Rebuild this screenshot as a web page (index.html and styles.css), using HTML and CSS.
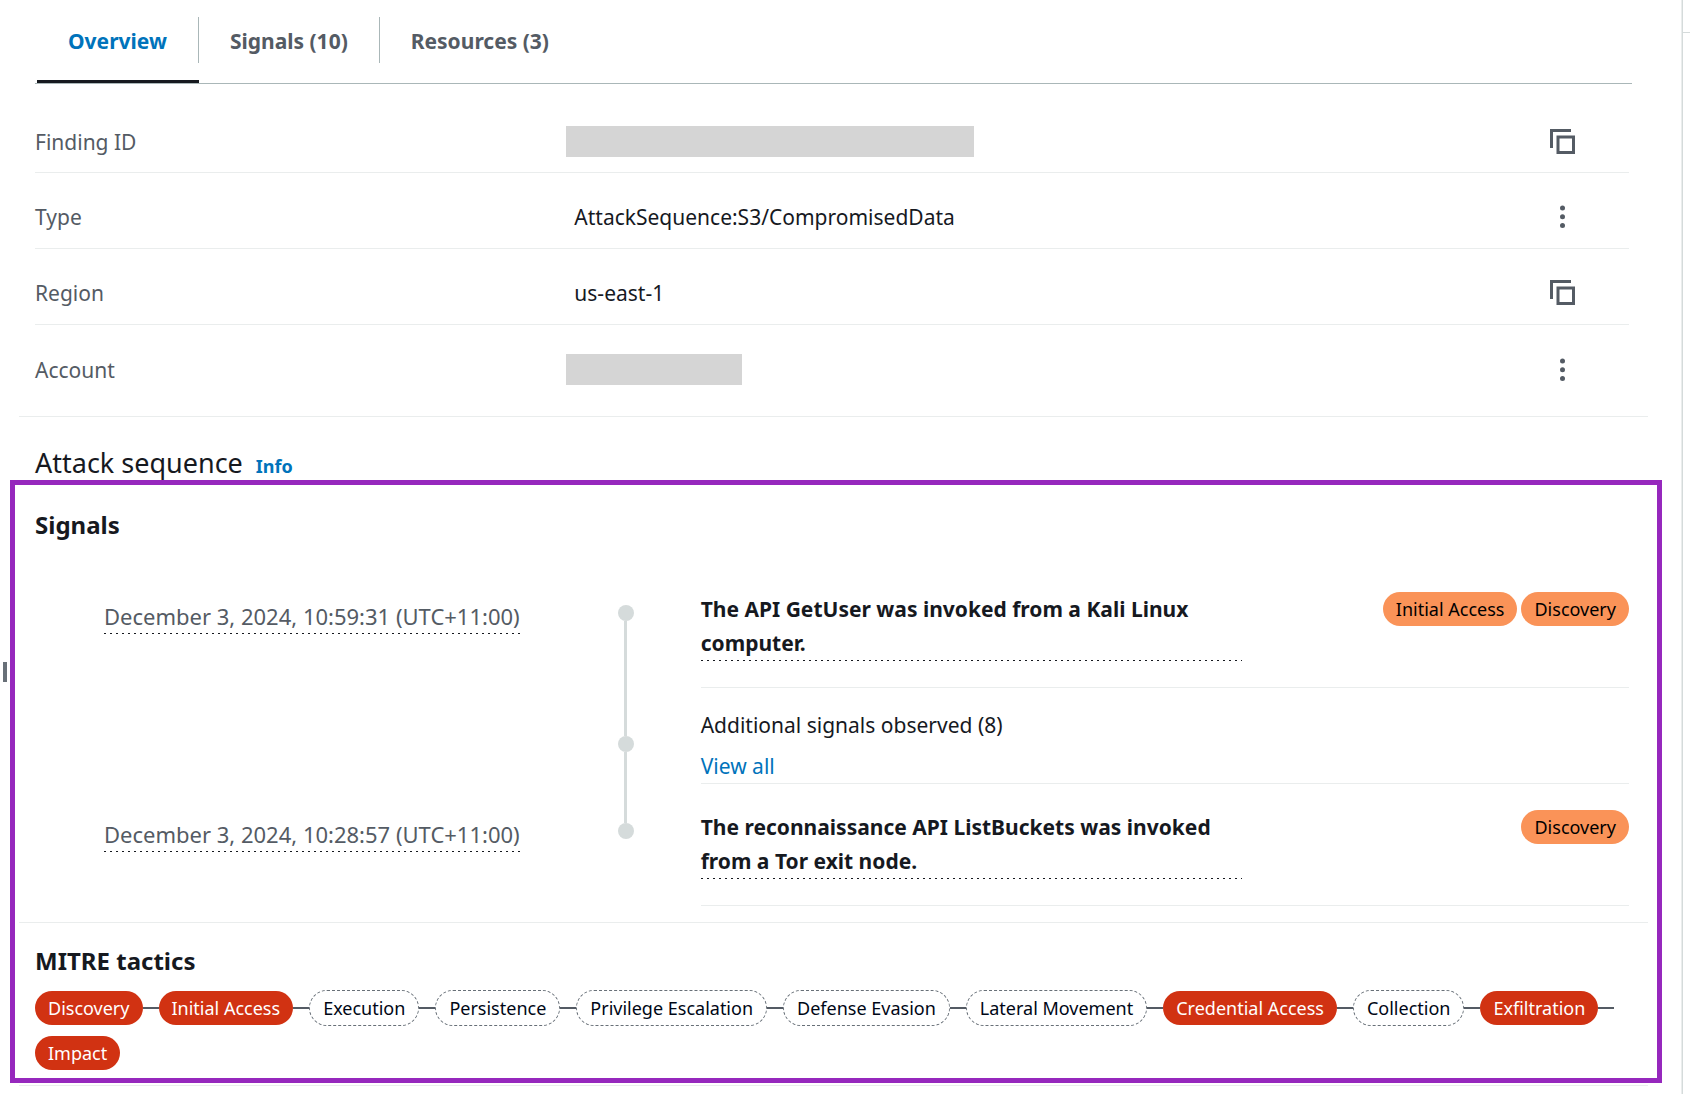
FILE: index.html
```html
<!DOCTYPE html>
<html lang="en">
<head>
    <meta charset="UTF-8">
    <meta name="viewport" content="width=device-width, initial-scale=1.0">
    <title>Finding details</title>
    <link rel="stylesheet" href="styles.css">
</head>
<body>
    <main class="panel">
        <div class="resize-handle"></div>

        <div class="tabs" role="tablist">
            <button class="tab active" role="tab" aria-selected="true">Overview</button>
            <button class="tab" role="tab" aria-selected="false">Signals (10)</button>
            <button class="tab" role="tab" aria-selected="false">Resources (3)</button>
        </div>

        <!-- Finding details -->
        <dl class="details">
            <div class="detail-row">
                <dt>Finding ID</dt>
                <dd>
                    <span class="redacted redacted-long"></span>
                    <button class="icon-button" aria-label="Copy finding ID">
                        <svg width="26" height="26" viewBox="0 0 26 26" fill="none" stroke="#545b64" stroke-width="3">
                            <path d="M21 1.5H1.5V19"/>
                            <rect x="8" y="8" width="15.5" height="15.5"/>
                        </svg>
                    </button>
                </dd>
            </div>
            <div class="detail-row">
                <dt>Type</dt>
                <dd>
                    <span class="value">AttackSequence:S3/CompromisedData</span>
                    <button class="icon-button" aria-label="Type actions">
                        <svg width="26" height="26" viewBox="0 0 26 26" fill="#545b64">
                            <circle cx="12.5" cy="4" r="2.5"/>
                            <circle cx="12.5" cy="12.7" r="2.5"/>
                            <circle cx="12.5" cy="21.4" r="2.5"/>
                        </svg>
                    </button>
                </dd>
            </div>
            <div class="detail-row">
                <dt>Region</dt>
                <dd>
                    <span class="value">us-east-1</span>
                    <button class="icon-button" aria-label="Copy region">
                        <svg width="26" height="26" viewBox="0 0 26 26" fill="none" stroke="#545b64" stroke-width="3">
                            <path d="M21 1.5H1.5V19"/>
                            <rect x="8" y="8" width="15.5" height="15.5"/>
                        </svg>
                    </button>
                </dd>
            </div>
            <div class="detail-row">
                <dt>Account</dt>
                <dd>
                    <span class="redacted redacted-short"></span>
                    <button class="icon-button" aria-label="Account actions">
                        <svg width="26" height="26" viewBox="0 0 26 26" fill="#545b64">
                            <circle cx="12.5" cy="4" r="2.5"/>
                            <circle cx="12.5" cy="12.7" r="2.5"/>
                            <circle cx="12.5" cy="21.4" r="2.5"/>
                        </svg>
                    </button>
                </dd>
            </div>
        </dl>

        <div class="section-title">
            <h2>Attack sequence</h2>
            <a href="#" class="info-link">Info</a>
        </div>

        <div class="highlight">
            <!-- Signals timeline -->
            <section class="signals">
                <h3>Signals</h3>
                <ol class="timeline">
                    <li class="event">
                        <div class="event-date"><time>December 3, 2024, 10:59:31 (UTC+11:00)</time></div>
                        <div class="track"><span class="dot"></span></div>
                        <div class="event-body">
                            <p class="event-title">The API GetUser was invoked from a Kali Linux computer.</p>
                            <div class="badges">
                                <span class="badge orange">Initial Access</span>
                                <span class="badge orange">Discovery</span>
                            </div>
                        </div>
                    </li>
                    <li class="event event-more">
                        <div class="event-date"></div>
                        <div class="track"><span class="dot"></span></div>
                        <div class="event-summary">
                            <p>Additional signals observed (8)</p>
                            <a href="#">View all</a>
                        </div>
                    </li>
                    <li class="event">
                        <div class="event-date"><time>December 3, 2024, 10:28:57 (UTC+11:00)</time></div>
                        <div class="track"><span class="dot"></span></div>
                        <div class="event-body">
                            <p class="event-title">The reconnaissance API ListBuckets was invoked from a Tor exit node.</p>
                            <div class="badges">
                                <span class="badge orange">Discovery</span>
                            </div>
                        </div>
                    </li>
                </ol>
            </section>

            <!-- MITRE tactics -->
            <section class="mitre">
                <h3>MITRE tactics</h3>
                <ul class="tactics">
                    <li><span class="badge red">Discovery</span></li>
                    <li><span class="badge red">Initial Access</span></li>
                    <li><span class="badge dashed">Execution</span></li>
                    <li><span class="badge dashed">Persistence</span></li>
                    <li><span class="badge dashed">Privilege Escalation</span></li>
                    <li><span class="badge dashed">Defense Evasion</span></li>
                    <li><span class="badge dashed">Lateral Movement</span></li>
                    <li><span class="badge red">Credential Access</span></li>
                    <li><span class="badge dashed">Collection</span></li>
                    <li><span class="badge red">Exfiltration</span></li>
                    <li><span class="badge red">Impact</span></li>
                </ul>
            </section>
        </div>

        <hr class="divider">
    </main>
    <aside class="side-strip"></aside>
</body>
</html>
```

FILE: styles.css
```css
* {
    box-sizing: border-box;
}

body {
    display: flex;
    min-height: 100vh;
    margin: 0;
    background-color: #fff;
    color: #16191f;
    font-family: 'Noto Sans', sans-serif;
    font-size: 21px;
    line-height: 34px;
}

h2, h3, p, dl, dd, ol, ul {
    margin: 0;
    padding: 0;
}

ol, ul {
    list-style: none;
}

a {
    color: #0073bb;
    text-decoration: none;
}

button {
    padding: 0;
    border: none;
    background: none;
    font-family: inherit;
    cursor: pointer;
}

.panel {
    position: relative;
    flex: 1;
    min-width: 0;
}

.resize-handle {
    position: absolute;
    top: 662px;
    left: 3px;
    width: 4px;
    height: 20px;
    background-color: #687078;
}

/* Strip of the neighbouring panel */
.side-strip {
    flex: 0 0 8px;
    border-left: 1px solid #d5dbdb;
    box-shadow: -1px 0 #eaeded;
}

.side-strip::before {
    content: "";
    display: block;
    height: 32px;
    border-bottom: 1px solid #d5dbdb;
}

/* Tabs */
.tabs {
    display: flex;
    margin: 0 50px 0 35px;
    padding-left: 2px;
    border-bottom: 1px solid #aab7b8;
}

.tab {
    display: flex;
    height: 83px;
    padding-top: 17px;
    border-bottom: 3px solid transparent;
    color: #545b64;
    font-size: 21px;
    font-weight: bold;
    line-height: 48px;
}

.tab::before {
    content: "";
    width: 31px;
    height: 46px;
}

.tab::after {
    content: "";
    width: 31px;
    height: 46px;
    border-right: 1px solid #aab7b8;
}

.tab:last-child::after {
    border-right: none;
}

.tab.active {
    border-bottom-color: #16191f;
    color: #0073bb;
}

/* Details list */
.details {
    margin: 0 34px 0 19px;
    padding: 13px 19px 15px 16px;
    border-bottom: 1px solid #eaeded;
}

.detail-row {
    display: grid;
    grid-template-columns: 1fr 2fr;
    align-items: center;
    height: 76px;
    padding: 29px 0 16px;
    border-bottom: 1px solid #eaeded;
    line-height: 30px;
}

.detail-row:last-child {
    border-bottom-color: transparent;
}

.detail-row dt {
    color: #545b64;
}

.detail-row dd {
    display: flex;
    align-items: center;
    justify-content: space-between;
    padding-right: 53px;
}

.value {
    padding-left: 8px;
}

.redacted {
    height: 31px;
    background-color: #d5d5d5;
}

.redacted-long {
    width: 408px;
}

.redacted-short {
    width: 176px;
}

.icon-button svg {
    display: block;
}

/* Attack sequence */
.section-title {
    display: flex;
    align-items: baseline;
    gap: 13px;
    padding: 32px 35px 0;
    line-height: 28px;
}

h2 {
    font-size: 27px;
    font-weight: normal;
}

.info-link {
    font-size: 18px;
    font-weight: bold;
}

.highlight {
    margin: 0 20px 0 10px;
    border: 5px solid #9628bd;
}

h3 {
    font-size: 24px;
    line-height: 36px;
}

.signals {
    margin: 0 9px 0 4px;
    padding: 22px 19px 16px 16px;
    border-bottom: 1px solid #eaeded;
}

.timeline {
    margin-top: 23px;
}

.event {
    display: grid;
    grid-template-columns: minmax(0, 5fr) 150px minmax(0, 9fr);
}

.event-date {
    padding: 33px 31px 0 0;
    color: #545b64;
    font-size: 22px;
    text-align: right;
}

/* Widely spaced dotted underline */
.event-date time,
.event-title {
    padding-bottom: 1px;
    background: repeating-linear-gradient(to right, #16191f 0 2px, transparent 2px 6px) left bottom / 100% 1px no-repeat;
}

.event-date time {
    display: inline-block;
}

.track {
    display: flex;
    flex-direction: column;
    align-items: center;
}

.track::before {
    content: "";
    width: 3px;
    height: 39px;
    background-color: #d5dbdb;
}

.track::after {
    content: "";
    flex: 1;
    width: 3px;
    background-color: #d5dbdb;
}

.event-more .track::before {
    height: 48px;
}

.event:first-child .track::before,
.event:last-child .track::after {
    background-color: transparent;
}

.dot {
    width: 16px;
    height: 16px;
    border-radius: 50%;
    background-color: #d5dbdb;
}

.event-body {
    display: grid;
    grid-template-columns: 7fr 5fr;
    align-items: start;
    padding: 26px 0;
    border-bottom: 1px solid #eaeded;
}

.event-title {
    font-weight: bold;
}

.event-summary {
    display: flex;
    flex-direction: column;
    align-items: flex-start;
    gap: 7px;
    padding-top: 20px;
    border-bottom: 1px solid #eaeded;
}

.badges {
    display: flex;
    justify-content: flex-end;
    gap: 4px;
}

.badge {
    padding: 0 13px;
    border-radius: 18px;
    font-size: 18px;
    line-height: 34px;
    white-space: nowrap;
}

.orange {
    background-color: #fa9358;
    color: #000;
}

.red {
    background-color: #d13212;
    color: #fff;
}

.dashed {
    border: 1px dashed #687078;
    color: #000716;
}

.mitre {
    padding: 20px 28px 8px 20px;
}

.tactics {
    display: flex;
    flex-wrap: wrap;
    row-gap: 10px;
    margin-top: 11px;
}

.tactics li {
    display: flex;
    align-items: center;
}

/* Line joining one tactic to the next */
.tactics li:not(:last-child)::after {
    content: "";
    width: 16px;
    height: 2px;
    background-color: #545b64;
}

.divider {
    height: 1px;
    margin: 2px 34px 0 19px;
    border: none;
    background-color: #eaeded;
}
```
